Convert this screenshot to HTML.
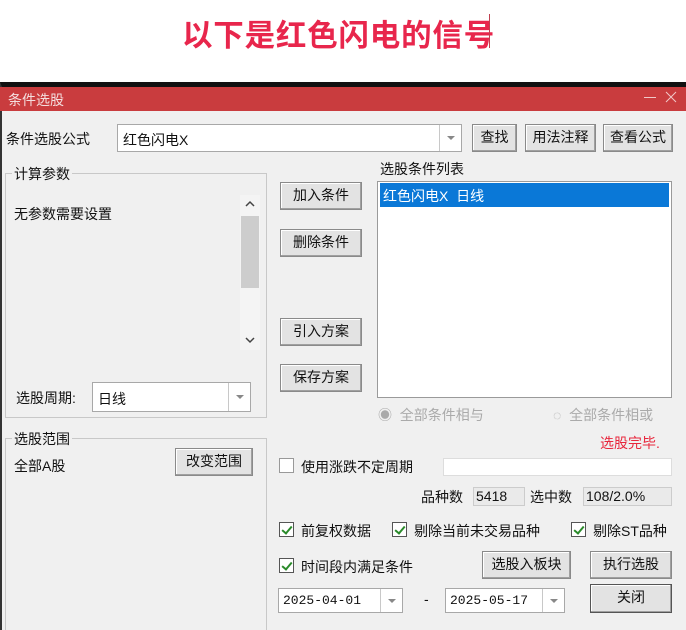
<!DOCTYPE html>
<html style="overflow:hidden;width:686px;height:630px"><head><meta charset="utf-8"><style>
*{margin:0;padding:0;box-sizing:border-box}
body{width:686px;height:630px;background:#fff;position:relative;overflow:hidden;font-family:"Liberation Sans","Noto Sans CJK SC",sans-serif;font-size:14px;color:#111}
.a{position:absolute;white-space:nowrap}
.h{left:182px;top:11px;font-size:30.5px;font-weight:bold;color:#e8264c;letter-spacing:0.8px}
.cur{left:489px;top:14px;width:1px;height:34px;background:#c04050}
.win{left:0;top:82px;width:686px;height:548px;background:#f0f0f0;border-top:5px solid #111;border-left:2px solid #333}
.title{left:0;top:87px;width:686px;height:24px;background:#c93c3e;color:#f4dede;font-size:14px;padding:3px 0 0 8px}
.btn{position:absolute;background:#e3e3e3;border:1px solid #8a8a8a;box-shadow:inset -1px -1px 0 #a0a0a0,inset 1px 1px 0 #fff;text-align:center;font-size:14px;line-height:25px}
.box{position:absolute;background:#fff;border:1px solid #a8a8a8}
.arr{position:absolute;top:0;right:0;bottom:0;width:22px;border-left:1px solid #c8c8c8}
.arr:after{content:"";position:absolute;left:7px;top:50%;margin-top:-2px;border-left:4px solid transparent;border-right:4px solid transparent;border-top:4px solid #888}
.grp{position:absolute;border:1px solid #c8c8c8}
.gl{position:absolute;background:#f0f0f0;padding:0 2px;font-size:14px}
.cb{position:absolute;width:15px;height:15px;border:1px solid #555;background:#fff}
.cb.k:after{content:"";position:absolute;left:4px;top:1px;width:4px;height:8px;border:solid #2a8a2a;border-width:0 2px 2px 0;transform:rotate(40deg)}
.ro{position:absolute;background:#eaeaea;border:1px solid #ccc;font-size:14px;padding-left:2px;line-height:17px}
</style></head><body>
<div class="a h">以下是红色闪电的信号</div>
<div class="a cur"></div>
<div class="a win"></div>
<div class="a title">条件选股</div>
<div class="a" style="left:644px;top:97px;width:12px;height:1px;background:#f0c8c8"></div>
<svg class="a" style="left:665px;top:91px" width="12" height="12"><path d="M1 1L11 11M11 1L1 11" stroke="#f0c8c8" stroke-width="1"/></svg>

<div class="a" style="left:6px;top:129px">条件选股公式</div>
<div class="box" style="left:117px;top:124px;width:345px;height:28px"><span class="a" style="left:5px;top:5px">红色闪电X</span><div class="arr"></div></div>
<div class="btn" style="left:472px;top:124px;width:45px;height:28px">查找</div>
<div class="btn" style="left:525px;top:124px;width:71px;height:28px">用法注释</div>
<div class="btn" style="left:603px;top:124px;width:70px;height:28px">查看公式</div>

<div class="grp" style="left:5px;top:173px;width:262px;height:245px"></div>
<div class="gl" style="left:12px;top:164px">计算参数</div>
<div class="a" style="left:14px;top:204px">无参数需要设置</div>
<div class="a" style="left:240px;top:195px;width:20px;height:155px;background:#f4f4f4"></div>
<div class="a" style="left:241px;top:216px;width:18px;height:72px;background:#cdcdcd"></div>
<svg class="a" style="left:245px;top:200px" width="10" height="8"><path d="M1 6L5 2L9 6" stroke="#444" stroke-width="1.5" fill="none"/></svg>
<svg class="a" style="left:245px;top:336px" width="10" height="8"><path d="M1 2L5 6L9 2" stroke="#444" stroke-width="1.5" fill="none"/></svg>
<div class="a" style="left:16px;top:388px">选股周期:</div>
<div class="box" style="left:92px;top:382px;width:159px;height:30px"><span class="a" style="left:5px;top:6px">日线</span><div class="arr"></div></div>

<div class="grp" style="left:5px;top:438px;width:262px;height:192px;border-bottom:none"></div>
<div class="gl" style="left:12px;top:429px">选股范围</div>
<div class="a" style="left:14px;top:456px">全部A股</div>
<div class="btn" style="left:175px;top:448px;width:78px;height:28px">改变范围</div>

<div class="btn" style="left:280px;top:182px;width:82px;height:28px">加入条件</div>
<div class="btn" style="left:280px;top:229px;width:82px;height:28px">删除条件</div>
<div class="btn" style="left:280px;top:318px;width:82px;height:28px">引入方案</div>
<div class="btn" style="left:280px;top:364px;width:82px;height:28px">保存方案</div>

<div class="a" style="left:380px;top:159px">选股条件列表</div>
<div class="box" style="left:377px;top:181px;width:295px;height:217px;border-color:#9a9a9a"></div>
<div class="a" style="left:380px;top:183px;width:289px;height:24px;background:#0a78d7;color:#fff;padding:3px 0 0 3px">红色闪电X&nbsp; 日线</div>

<div class="a" style="left:378px;top:405px;color:#aaa;font-size:14px">◉&nbsp; 全部条件相与</div>
<div class="a" style="left:553px;top:405px;color:#aaa;font-size:14px">◌&nbsp; 全部条件相或</div>
<div class="a" style="left:600px;top:433px;color:#e8263c;font-size:14px">选股完毕.</div>

<div class="cb" style="left:279px;top:458px;border-color:#999"></div>
<div class="a" style="left:301px;top:457px">使用涨跌不定周期</div>
<div class="box" style="left:443px;top:458px;width:229px;height:18px;border-color:#ddd"></div>
<div class="a" style="left:421px;top:487px">品种数</div>
<div class="ro" style="left:473px;top:487px;width:52px;height:19px">5418</div>
<div class="a" style="left:530px;top:487px">选中数</div>
<div class="ro" style="left:583px;top:487px;width:89px;height:19px">108/2.0%</div>

<div class="cb k" style="left:279px;top:522px"></div>
<div class="a" style="left:301px;top:521px">前复权数据</div>
<div class="cb k" style="left:392px;top:522px"></div>
<div class="a" style="left:414px;top:521px">剔除当前未交易品种</div>
<div class="cb k" style="left:571px;top:522px"></div>
<div class="a" style="left:593px;top:521px">剔除ST品种</div>

<div class="cb k" style="left:279px;top:558px"></div>
<div class="a" style="left:301px;top:557px">时间段内满足条件</div>
<div class="btn" style="left:482px;top:551px;width:89px;height:28px">选股入板块</div>
<div class="btn" style="left:590px;top:551px;width:82px;height:28px">执行选股</div>

<div class="box" style="left:278px;top:588px;width:125px;height:25px"><span class="a" style="left:4px;top:4px;font-family:'Liberation Mono',monospace;font-size:13px">2025-04-01</span><div class="arr"></div></div>
<div class="a" style="left:424px;top:591px">-</div>
<div class="box" style="left:445px;top:588px;width:120px;height:25px"><span class="a" style="left:4px;top:4px;font-family:'Liberation Mono',monospace;font-size:13px">2025-05-17</span><div class="arr"></div></div>
<div class="btn" style="left:590px;top:584px;width:82px;height:29px;border-color:#555">关闭</div>
</body></html>
